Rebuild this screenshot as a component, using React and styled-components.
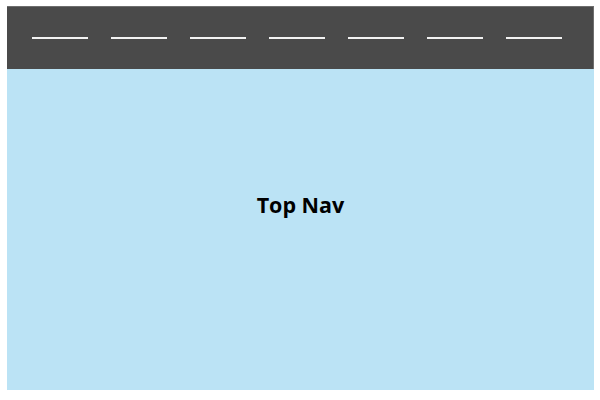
import React from 'react';
import styled, { createGlobalStyle } from 'styled-components';

const GlobalStyle = createGlobalStyle`
  html, body {
    margin: 0;
    padding: 0;
    background: #ffffff;
  }
  body {
    font-family: "Open Sans", "Liberation Sans", sans-serif;
  }
`;

const Page = styled.div`
  width: 600px;
  height: 400px;
  padding: 6px 6px 10px 7px;
  box-sizing: border-box;
`;

const Frame = styled.div`
  width: 587px;
  height: 384px;
  display: flex;
  flex-direction: column;
  background-color: #bbe3f5;
`;

const NavBar = styled.div`
  height: 63px;
  flex-shrink: 0;
  display: flex;
  align-items: center;
  gap: 23px;
  padding-left: 25px;
  box-sizing: border-box;
  background-color: #4a4a4a;
  border-top: 1px solid #6e6e6e;
  border-right: 1px solid #6e6e6e;
`;

const NavLink = styled.span`
  display: block;
  width: 56px;
  height: 2px;
  background-color: #f2f2f2;
`;

const Content = styled.div`
  flex: 1;
  display: flex;
  justify-content: center;
  align-items: flex-start;
  padding-top: 121px;
`;

const Label = styled.div`
  font-size: 21.5px;
  font-weight: 700;
  line-height: 29px;
  color: #000000;
`;

const links = [1, 2, 3, 4, 5, 6, 7];

const App = () => {
  return (
    <>
      <GlobalStyle />
      <Page>
        <Frame>
          <NavBar>
            {links.map((n) => (
              <NavLink key={n} />
            ))}
          </NavBar>
          <Content>
            <Label>Top Nav</Label>
          </Content>
        </Frame>
      </Page>
    </>
  );
};

export default App;
